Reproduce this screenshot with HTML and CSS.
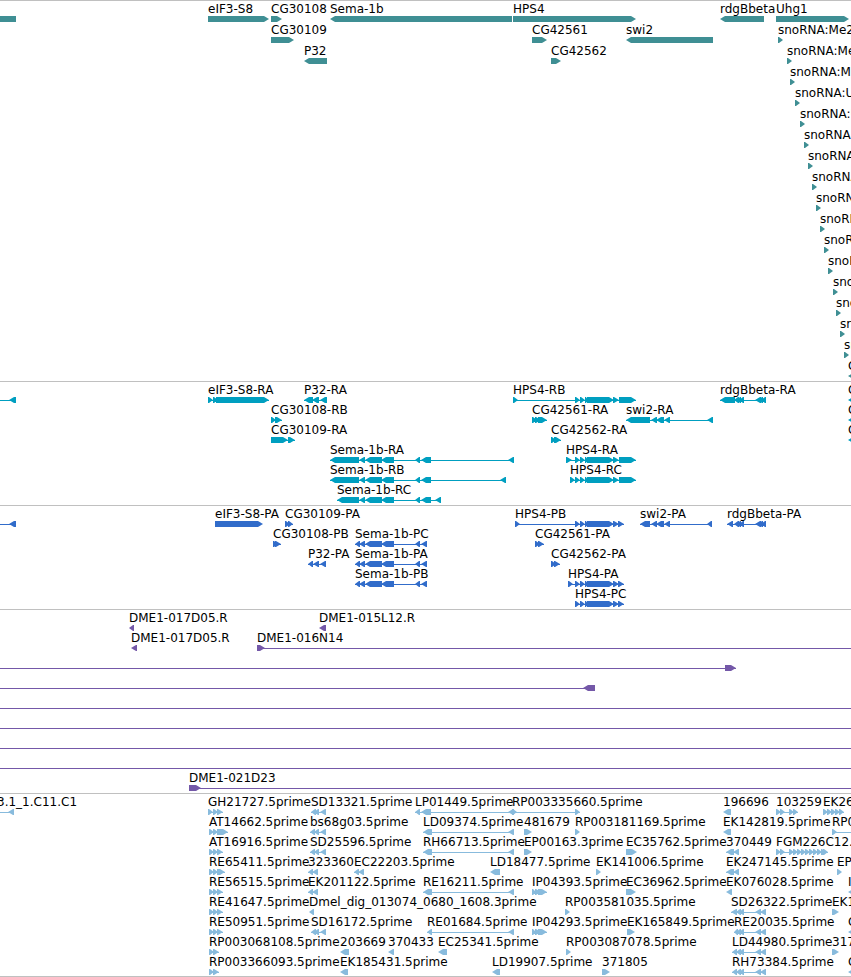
FILE: index.html
```
<!DOCTYPE html>
<html lang="en">
<head>
  <meta charset="UTF-8">
  <meta name="viewport" content="width=device-width, initial-scale=1.0">
  <title>Genome Browser</title>
  <link rel="stylesheet" href="styles.css">
</head>
<body>
  <main class="browser">
    <section class="track genes" id="genes" aria-label="Genes"></section>
    <section class="track transcripts" id="transcripts" aria-label="Transcripts"></section>
    <section class="track proteins" id="proteins" aria-label="Coding sequences"></section>
    <section class="track clones" id="clones" aria-label="Clones"></section>
    <section class="track ests" id="ests" aria-label="ESTs"></section>
  </main>

  <script src="script.js"></script>
</body>
</html>
```
FILE: styles.css
```
:root {
  --rule: #c0c0c0;
  --gene: #3f8f94;
  --transcript: #009fc0;
  --protein: #316cca;
  --clone: #7458a8;
  --est: #88bbdd;
}

body {
  margin: 0;
  background: #fff;
  color: #000;
  font-family: "DejaVu Sans", Verdana, sans-serif;
  font-size: 12px;
}

.browser {
  overflow: hidden;
  border-bottom: 1px solid var(--rule);
}

.track {
  display: flex;
  flex-direction: column;
  padding: 1px 0 2px;
  border-top: 1px solid var(--rule);
}

.track:last-child {
  padding-bottom: 1px;
}

.genes {
  gap: 1px;
  color: var(--gene);
}

.transcripts { color: var(--transcript); }
.proteins { color: var(--protein); }
.clones { color: var(--clone); }
.ests { color: var(--est); }

.labels {
  position: relative;
  height: 14px;
}

/* labels sit at the genomic start of their feature */
.label {
  position: absolute;
  top: 0;
  line-height: 14px;
  color: #000;
  white-space: nowrap;
}

.glyphs {
  display: block;
  width: 100%;
  height: 6px;
  fill: currentColor;
}
```
FILE: script.js
```
// feature: [name, strand, [start, end], [start, end], ...]
const FAR_LEFT = [-60, -50];
const FAR_RIGHT = [4000, 4010];

const semaExons = [[359, 365], [365, 382], [381, 394], [415, 420], [421, 431]];
const hpsExons = [[575, 580], [580, 585], [585, 588], [587, 614], [613, 619], [619, 636]];
const semaCds = [[355, 360], [359, 365], [365, 382], [381, 394], [415, 420], [421, 427]];
const hpsCds = [[575, 580], [580, 585], [585, 588], [587, 614], [613, 619], [618, 624]];
const swiExons = [[651, 657], [656, 664], [664, 670]];
const rdgExons = [[734, 739], [737, 741], [739, 744], [755, 761], [758, 763], [761, 766]];
const estStart = [[209, 214], [213, 218], [217, 223]];
const p32Est = [[311, 316], [314, 319], [320, 326]];
const semaEst = [[423, 432], [508, 514]];
const ipEst = [[532, 536], [535, 541], [538, 547]];
const rdgEst = [[736, 741], [739, 744], [755, 761], [760, 766]];

function run(start, count) {
  return Array.from({ length: count }, (_, i) => [start + i * 4, start + i * 4 + 5]);
}

const tracks = {
  genes: [
    [['', '-', [-60, 16]], ['eIF3-S8', '+', [208, 269]], ['CG30108', '+', [271, 282]],
      ['Sema-1b', '-', [330, 512]], ['HPS4', '+', [513, 636]],
      ['rdgBbeta', '-', [720, 764]], ['Uhg1', '+', [776, 849]]],
    [['CG30109', '+', [271, 294]], ['CG42561', '+', [532, 547]], ['swi2', '-', [626, 713]],
      ['snoRNA:Me2', '+', [778, 783]]],
    [['P32', '-', [304, 327]], ['CG42562', '+', [551, 561]], ['snoRNA:Me', '+', [787, 792]]],
    [['snoRNA:Me', '+', [790, 795]]],
    [['snoRNA:U', '+', [795, 800]]],
    [['snoRNA:U', '+', [800, 805]]],
    [['snoRNA:U', '+', [804, 809]]],
    [['snoRNA:U', '+', [808, 813]]],
    [['snoRNA:U', '+', [812, 817]]],
    [['snoRNA:U', '+', [816, 821]]],
    [['snoRNA:U', '+', [820, 825]]],
    [['snoRNA:U', '+', [824, 829]]],
    [['snoRNA:U', '+', [828, 833]]],
    [['snoRNA:U', '+', [833, 838]]],
    [['snoRNA:U', '+', [836, 841]]],
    [['snoRNA:U', '+', [840, 845]]],
    [['snoRNA:U', '+', [844, 849]]],
    [['CG', '-', [848, 890]]]
  ],

  transcripts: [
    [['', '-', FAR_LEFT, [9, 16]], ['eIF3-S8-RA', '+', [208, 213], [213, 218], [216, 269]],
      ['P32-RA', '-', [304, 313], [312, 319], [320, 327]],
      ['HPS4-RB', '+', [513, 518], ...hpsExons],
      ['rdgBbeta-RA', '-', [720, 735], ...rdgExons], ['CG', '-', [848, 890]]],
    [['CG30108-RB', '+', [271, 276], [275, 282]],
      ['CG42561-RA', '+', [532, 537], [535, 541], [538, 547]],
      ['swi2-RA', '-', [626, 650], ...swiExons, [707, 713]], ['CG', '-', [848, 890]]],
    [['CG30109-RA', '+', [271, 288], [288, 295]], ['CG42562-RA', '+', [551, 556], [554, 561]],
      ['CG', '-', [848, 890]]],
    [['Sema-1b-RA', '-', [330, 359], ...semaExons, [508, 514]],
      ['HPS4-RA', '+', [566, 572], ...hpsExons]],
    [['Sema-1b-RB', '-', [330, 359], ...semaExons, [500, 506]],
      ['HPS4-RC', '+', [570, 575], ...hpsExons]],
    [['Sema-1b-RC', '-', [337, 359], ...semaExons, [435, 441]]]
  ],

  proteins: [
    [['', '-', FAR_LEFT, [9, 16]], ['eIF3-S8-PA', '+', [215, 263]],
      ['CG30109-PA', '+', [285, 290], [288, 293]],
      ['HPS4-PB', '+', [515, 520], ...hpsCds],
      ['swi2-PA', '-', [640, 650], ...swiExons, [707, 712]],
      ['rdgBbeta-PA', '-', [727, 733], ...rdgExons]],
    [['CG30108-PB', '+', [273, 278], [275, 281]], ['Sema-1b-PC', '-', ...semaCds],
      ['CG42561-PA', '+', [535, 540], [538, 544]]],
    [['P32-PA', '-', [308, 313], [313, 319], [320, 326]], ['Sema-1b-PA', '-', ...semaCds],
      ['CG42562-PA', '+', [551, 556], [554, 560]]],
    [['Sema-1b-PB', '-', ...semaCds], ['HPS4-PA', '+', [568, 573], ...hpsCds]],
    [['HPS4-PC', '+', ...hpsCds]]
  ],

  clones: [
    [['DME1-017D05.R', '-', [129, 134]], ['DME1-015L12.R', '-', [319, 326]]],
    [['DME1-017D05.R', '-', [131, 137]], ['DME1-016N14', '+', [257, 265], FAR_RIGHT]],
    [['', '+', FAR_LEFT, [725, 736]]],
    [['', '-', FAR_LEFT, [583, 595]]],
    [['', '+', FAR_LEFT, FAR_RIGHT]],
    [['', '+', FAR_LEFT, FAR_RIGHT]],
    [['', '+', FAR_LEFT, FAR_RIGHT]],
    [['', '+', FAR_LEFT, FAR_RIGHT]],
    [['DME1-021D23', '+', [189, 201], FAR_RIGHT]]
  ],

  ests: [
    [['3.1_1.C11.C1', '-', [-3, -1], [8, 14]],
      ['GH21727.5prime', '+', [208, 213], [213, 218], [217, 223]],
      ['SD13321.5prime', '-', ...p32Est],
      ['LP01449.5prime', '-', [415, 420], [421, 431], [508, 514]],
      ['RP003335660.5prime', '+', [512, 517], [575, 580]],
      ['196696', '-', [723, 731]],
      ['103259', '+', [776, 781], [780, 785], [789, 794], [793, 798]],
      ['EK26', '+', ...run(823, 5)]],
    [['AT14662.5prime', '+', [209, 214], [213, 218], [217, 228]],
      ['bs68g03.5prime', '-', [310, 315], [314, 319], [320, 326]],
      ['LD09374.5prime', '-', ...semaEst], ['481679', '+', [524, 532]],
      ['RP003181169.5prime', '+', [575, 580]], ['EK142819.5prime', '-', [723, 731]],
      ['RP0', '+', [832, 837], FAR_RIGHT]],
    [['AT16916.5prime', '+', ...estStart],
      ['SD25596.5prime', '-', [310, 315], [314, 319], [320, 326]],
      ['RH66713.5prime', '-', ...semaEst], ['EP00163.3prime', '+', [524, 532]],
      ['EC35762.5prime', '+', [626, 637]], ['370449', '-', [726, 734], [733, 739]],
      ['FGM226C12.5', '+', [776, 781], [780, 785], ...run(789, 9), [823, 828]]],
    [['RE65411.5prime', '+', [209, 214], [213, 218], [217, 225]],
      ['323360', '-', [308, 313], [312, 318]], ['EC22203.5prime', '-', [354, 359], [358, 364]],
      ['LD18477.5prime', '-', [490, 500]], ['EK141006.5prime', '+', [596, 601]],
      ['EK247145.5prime', '-', [726, 734], [733, 739]], ['EP', '+', [837, 842]]],
    [['RE56515.5prime', '+', ...estStart], ['EK201122.5prime', '-', [308, 313], [312, 318]],
      ['RE16211.5prime', '-', ...semaEst], ['IP04393.5prime', '+', ...ipEst],
      ['EC36962.5prime', '+', [626, 636]], ['EK076028.5prime', '-', [726, 732]],
      ['I', '-', [848, 856]]],
    [['RE41647.5prime', '+', ...estStart],
      ['Dmel_dig_013074_0680_1608.3prime', '-', [309, 314]],
      ['RP003581035.5prime', '+', [565, 570]],
      ['SD26322.5prime', '-', [731, 737], ...rdgEst], ['EK1', '+', [832, 839]]],
    [['RE50951.5prime', '+', ...estStart], ['SD16172.5prime', '-', ...p32Est],
      ['RE01684.5prime', '-', [427, 432], [508, 514]], ['IP04293.5prime', '+', ...ipEst],
      ['EK165849.5prime', '+', [627, 635]],
      ['RE20035.5prime', '-', [734, 738], ...rdgEst], ['C', '-', [848, 856]]],
    [['RP003068108.5prime', '+', [209, 214], [213, 219]], ['203669', '-', [340, 349]],
      ['370433', '-', [388, 394]], ['EC25341.5prime', '-', [438, 447]],
      ['RP003087078.5prime', '+', [566, 571]],
      ['LD44980.5prime', '-', [732, 737], ...rdgEst], ['317', '+', [832, 839]]],
    [['RP003366093.5prime', '+', [209, 214], [213, 219]], ['EK185431.5prime', '-', [340, 348]],
      ['LD19907.5prime', '-', [492, 500]], ['371805', '+', [602, 610]],
      ['RH73384.5prime', '-', [732, 737], ...rdgEst], ['C', '-', [848, 856]]]
  ]
};

// a block is a bar that narrows to a point on the side of its strand
function blockPath([start, end], strand) {
  const tip = Math.min(6, end - start);
  if (strand === '+') {
    return `M${start} 0H${end - tip + 1}L${end} 3L${end - tip + 1} 6H${start}Z`;
  }
  return `M${end} 0H${start + tip - 1}L${start} 3L${start + tip - 1} 6H${end}Z`;
}

function rowHtml(features) {
  let labels = '';
  let glyphs = '';
  for (const [name, strand, ...blocks] of features) {
    const start = blocks[0][0];
    const end = blocks[blocks.length - 1][1];
    if (name) {
      labels += `<span class="label" style="left: ${start}px">${name}</span>`;
    }
    if (blocks.length > 1) {
      glyphs += `<rect x="${start}" y="3" width="${end - start}" height="1"/>`;
    }
    glyphs += `<path d="${blocks.map(b => blockPath(b, strand)).join('')}"/>`;
  }
  return `<div class="row"><div class="labels">${labels}</div><svg class="glyphs" aria-hidden="true">${glyphs}</svg></div>`;
}

for (const [id, rows] of Object.entries(tracks)) {
  document.getElementById(id).innerHTML = rows.map(rowHtml).join('');
}
```
